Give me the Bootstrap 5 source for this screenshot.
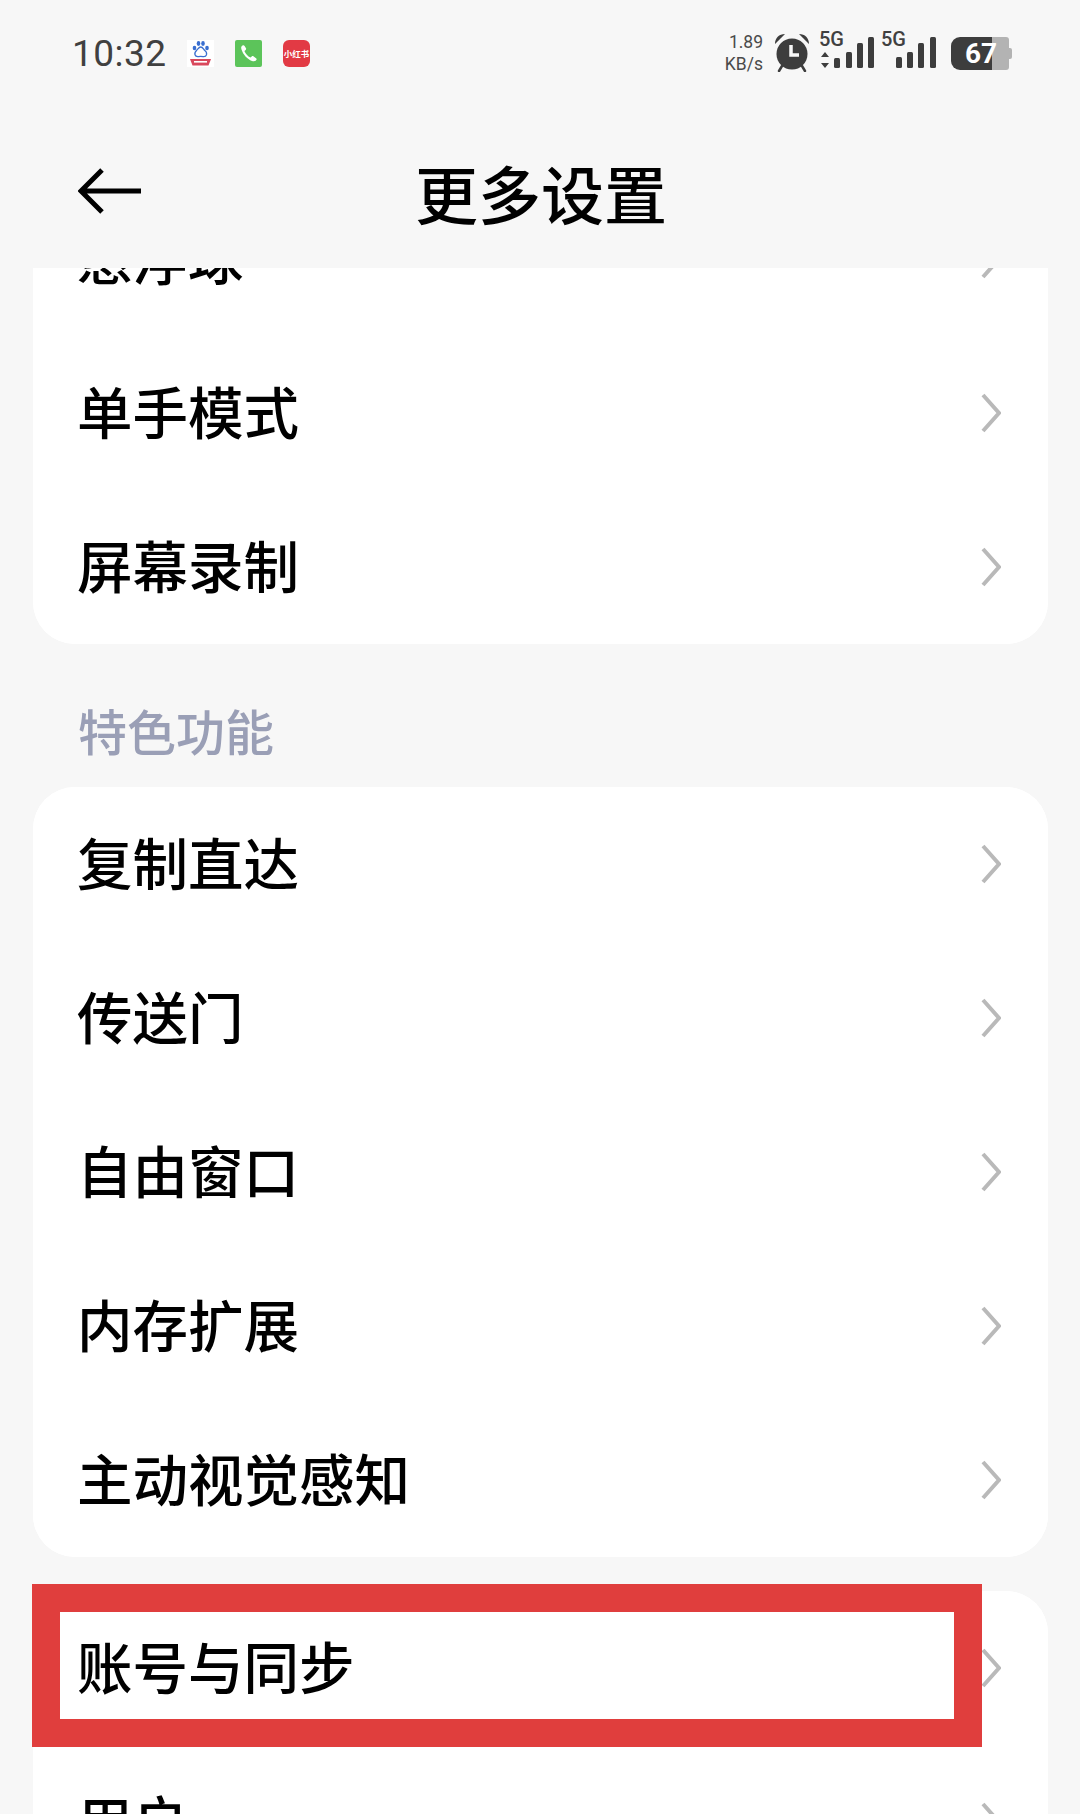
<!DOCTYPE html>
<html lang="zh-CN">
<head>
  <meta charset="UTF-8" />
  <meta name="viewport" content="width=device-width, initial-scale=1.0"/>
  <title>更多设置</title>
  <link href="https://cdn.jsdelivr.net/npm/bootstrap@5.3.3/dist/css/bootstrap.min.css" rel="stylesheet">
  <style>
    html, body { height: 100%; }
    body {
      background: #f7f7f7;
      font-family: "Noto Sans CJK SC", "Liberation Sans", sans-serif;
      color: #000;
      overflow: hidden;
    }
    .phone { position: relative; width: 1080px; height: 1814px; overflow: hidden; }

    /* status bar */
    .status-row { height: 106px; padding: 0 68px 0 72px; }
    .status-time { font-family: Roboto, "Liberation Sans", sans-serif; font-size: 37px; color: #404040; line-height: 1; letter-spacing: .5px; width: 95px; }
    .app-dots { margin-left: 20px; gap: 21px; }
    .app-dot { width: 27px; height: 27px; display: block; }
    .red-dot { background: #e23a44; border-radius: 6px; color: #fff; font-size: 8.5px; font-weight: 700; line-height: 27px; text-align: center; white-space: nowrap; overflow: hidden; }
    .net-speed { font-family: Roboto, "Liberation Sans", sans-serif; font-size: 17.5px; line-height: 22px; color: #4a4a4a; text-align: right; margin-right: 12px; }
    .sig-label { font-family: Roboto, "Liberation Sans", sans-serif; font-size: 20px; font-weight: 500; fill: #404040; }
    .status-svg { display: block; }

    /* title bar */
    .title-row { display: grid; grid-template-columns: 1fr auto 1fr; align-items: center; height: 162px; padding: 8px 76px 0 78px; }
    .title-text { font-size: 63px; font-weight: 500; line-height: 1; }

    /* list */
    .scroll-area { height: 1546px; overflow: hidden; padding: 0 32px 0 33px; }
    .first-block { margin-top: -86px; }
    .set-card { border: 0; border-radius: 42px; overflow: hidden; }
    .set-row {
      height: 154px;
      border: 0;
      padding: 0 47px 4px 44px;
      font-size: 55.5px;
      font-weight: 500;
      line-height: 1;
      color: #000;
    }
    .set-row svg { margin-top: 4px; }
    .group-label { height: 143px; padding: 28px 0 0 45px; font-size: 49px; font-weight: 500; color: #9a9fb6; line-height: 1; }
    .gap-block { height: 34px; }

    /* annotation drawn over the screenshot */
    .red-frame { position: absolute; left: 32px; top: 1584px; width: 950px; height: 163px; border: solid #e03e3d; border-width: 28px; }
  </style>
</head>
<body>

<div class="phone">
  <!-- status bar -->
  <div class="status-row d-flex align-items-center">
    <span class="status-time">10:32</span>
    <div class="app-dots d-flex align-items-center">
      <svg class="app-dot" viewBox="0 0 27 27">
        <rect width="27" height="27" fill="#fff"/>
        <g fill="#3a6fd0">
          <ellipse cx="7.500" cy="8" rx="1.800" ry="2.300"/><ellipse cx="11.500" cy="3.500" rx="1.800" ry="2.400"/>
          <ellipse cx="16" cy="3.500" rx="1.800" ry="2.400"/><ellipse cx="20" cy="8" rx="1.800" ry="2.300"/>
        </g>
        <path d="M13.700 7c-2 0-2.600 2-4 3.200C8 11.700 7.500 13 8 14.800c.5 1.500 2 2 3.500 1.800 1.400-.2 3-.2 4.500 0 1.600.2 3-.4 3.500-1.900.4-1.600-.2-3-1.700-4.100C16.500 9.400 15.800 7 13.700 7z" fill="none" stroke="#3a6fd0" stroke-width="1.300"/>
        <path d="M3 19h21l-2.500 6.500h-16z" fill="#d9485c"/>
        <rect x="7" y="21" width="13" height="1.600" fill="#fff"/>
      </svg>
      <svg class="app-dot" viewBox="0 0 27 27">
        <rect width="27" height="27" rx="2" fill="#5cc45a"/>
        <path d="M7.500 5.500c-1.200.8-1.700 2-1 4 1.600 5 5.500 9.500 10.500 11.500 1.900.7 3.300.3 4.300-1 .5-.7.400-1.300-.2-1.800l-2.700-1.900c-.6-.4-1.200-.3-1.700.2l-1.100 1.100c-3-1.500-5-4-6.200-6.700l1.300-1c.5-.5.6-1.100.3-1.700L9.600 5.900c-.5-.7-1.300-.9-2.100-.4z" fill="#fff"/>
      </svg>
      <span class="app-dot red-dot">小红书</span>
    </div>

    <div class="ms-auto d-flex align-items-center">
      <div class="net-speed">1.89<br>KB/s</div>
      <svg class="status-svg" width="34" height="38" viewBox="0 0 34 38">
        <path d="M0 10 C0 4 4 0 10 0 Z M34 10 C34 4 30 0 24 0 Z" fill="#3d3d3d"/>
        <circle cx="17" cy="20" r="15.500" fill="#3d3d3d"/>
        <path d="M7 32 4 37M27 32l3 5" stroke="#3d3d3d" stroke-width="2.500" stroke-linecap="round"/>
        <path d="M16 11v10h8" fill="none" stroke="#f7f7f7" stroke-width="3.500"/>
      </svg>
      <svg class="status-svg" style="margin-left:10px" width="57" height="52" viewBox="0 -8 57 52">
        <text class="sig-label" x="0" y="11">5G</text>
        <path d="M6 17l4 5H2zM6 33l4-5H2z" fill="#3d3d3d"/>
        <rect x="15" y="23" width="6" height="10" rx="1.500" fill="#3d3d3d"/>
        <rect x="27" y="17" width="6" height="16" rx="1.500" fill="#3d3d3d"/>
        <rect x="38" y="8" width="6" height="25" rx="1.500" fill="#3d3d3d"/>
        <rect x="49" y="2" width="6" height="31" rx="1.500" fill="#3d3d3d"/>
      </svg>
      <svg class="status-svg" style="margin-left:5px" width="56" height="52" viewBox="0 -8 56 52">
        <text class="sig-label" x="0" y="11">5G</text>
        <rect x="15" y="22" width="6" height="11" rx="1.500" fill="#3d3d3d"/>
        <rect x="26" y="17" width="6" height="16" rx="1.500" fill="#3d3d3d"/>
        <rect x="37" y="8" width="6" height="25" rx="1.500" fill="#3d3d3d"/>
        <rect x="49" y="2" width="6" height="31" rx="1.500" fill="#3d3d3d"/>
      </svg>
      <svg class="status-svg" style="margin-left:14px" width="61" height="33" viewBox="0 0 61 33">
        <path d="M41 0h14a3 3 0 0 1 3 3v27a3 3 0 0 1-3 3H41z" fill="#b3b3b3"/>
        <path d="M58 11h1a2 2 0 0 1 2 2v7a2 2 0 0 1-2 2h-1z" fill="#b3b3b3"/>
        <path d="M9 0h32v33H9a9 9 0 0 1-9-9V9a9 9 0 0 1 9-9z" fill="#3d3d3d"/>
        <text x="14" y="26" font-family="Roboto, 'Liberation Sans', sans-serif" font-size="28" font-weight="700" fill="#fff">67</text>
      </svg>
    </div>
  </div>

  <!-- title bar -->
  <div class="title-row">
    <svg width="64" height="46" viewBox="0 0 64 46">
      <path d="M2 23h61M24 2 3 23l21 21" fill="none" stroke="#000" stroke-width="5"/>
    </svg>
    <span class="title-text">更多设置</span>
    <span></span>
  </div>

  <!-- settings list, scrolled so the first row slips under the title bar -->
  <div class="scroll-area">
    <div class="card set-card first-block">
      <div class="list-group list-group-flush">
        <div class="list-group-item set-row d-flex justify-content-between align-items-center">悬浮球
          <svg width="20" height="40" viewBox="0 0 20 40"><path d="M2 2l16 18L2 38" fill="none" stroke="#b9b9b9" stroke-width="4"/></svg></div>
        <div class="list-group-item set-row d-flex justify-content-between align-items-center">单手模式
          <svg width="20" height="40" viewBox="0 0 20 40"><path d="M2 2l16 18L2 38" fill="none" stroke="#b9b9b9" stroke-width="4"/></svg></div>
        <div class="list-group-item set-row d-flex justify-content-between align-items-center">屏幕录制
          <svg width="20" height="40" viewBox="0 0 20 40"><path d="M2 2l16 18L2 38" fill="none" stroke="#b9b9b9" stroke-width="4"/></svg></div>
      </div>
    </div>

    <div class="group-label d-flex align-items-center">特色功能</div>

    <div class="card set-card">
      <div class="list-group list-group-flush">
        <div class="list-group-item set-row d-flex justify-content-between align-items-center">复制直达
          <svg width="20" height="40" viewBox="0 0 20 40"><path d="M2 2l16 18L2 38" fill="none" stroke="#b9b9b9" stroke-width="4"/></svg></div>
        <div class="list-group-item set-row d-flex justify-content-between align-items-center">传送门
          <svg width="20" height="40" viewBox="0 0 20 40"><path d="M2 2l16 18L2 38" fill="none" stroke="#b9b9b9" stroke-width="4"/></svg></div>
        <div class="list-group-item set-row d-flex justify-content-between align-items-center">自由窗口
          <svg width="20" height="40" viewBox="0 0 20 40"><path d="M2 2l16 18L2 38" fill="none" stroke="#b9b9b9" stroke-width="4"/></svg></div>
        <div class="list-group-item set-row d-flex justify-content-between align-items-center">内存扩展
          <svg width="20" height="40" viewBox="0 0 20 40"><path d="M2 2l16 18L2 38" fill="none" stroke="#b9b9b9" stroke-width="4"/></svg></div>
        <div class="list-group-item set-row d-flex justify-content-between align-items-center">主动视觉感知
          <svg width="20" height="40" viewBox="0 0 20 40"><path d="M2 2l16 18L2 38" fill="none" stroke="#b9b9b9" stroke-width="4"/></svg></div>
      </div>
    </div>

    <div class="gap-block"></div>

    <div class="card set-card">
      <div class="list-group list-group-flush">
        <div class="list-group-item set-row d-flex justify-content-between align-items-center">账号与同步
          <svg width="20" height="40" viewBox="0 0 20 40"><path d="M2 2l16 18L2 38" fill="none" stroke="#b9b9b9" stroke-width="4"/></svg></div>
        <div class="list-group-item set-row d-flex justify-content-between align-items-center">用户
          <svg width="20" height="40" viewBox="0 0 20 40"><path d="M2 2l16 18L2 38" fill="none" stroke="#b9b9b9" stroke-width="4"/></svg></div>
      </div>
    </div>
  </div>

  <div class="red-frame"></div>
</div>

<script src="https://cdn.jsdelivr.net/npm/bootstrap@5.3.3/dist/js/bootstrap.bundle.min.js"></script>
</body>
</html>
